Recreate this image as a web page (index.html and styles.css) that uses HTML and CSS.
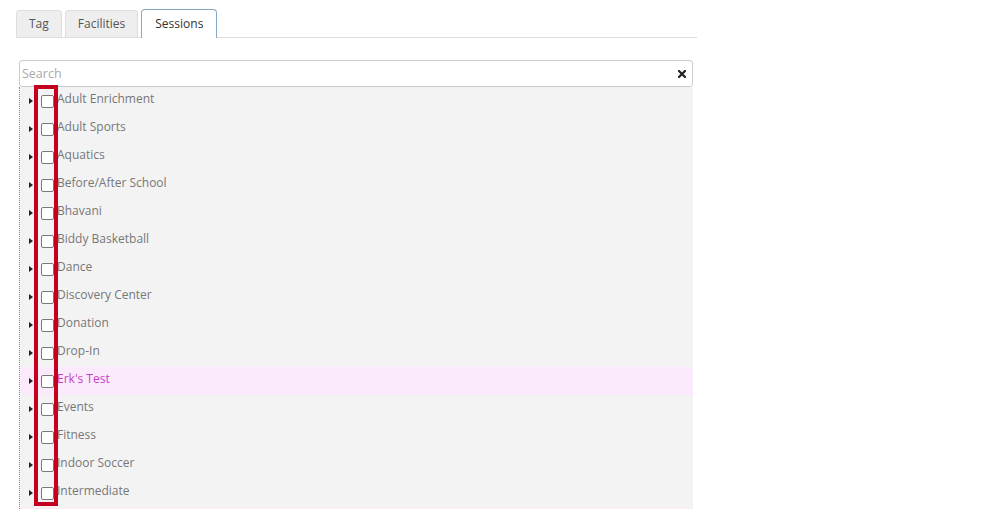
FILE: index.html
```html
<!DOCTYPE html>
<html lang="en">
<head>
<meta charset="utf-8">
<title>Sessions</title>
<link rel="stylesheet" href="styles.css">
</head>
<body>
<div class="page">
  <div class="tabs">
    <div class="tab">Tag</div>
    <div class="tab">Facilities</div>
    <div class="tab active">Sessions</div>
  </div>
  <div class="search">
    <span class="placeholder">Search</span>
    <svg class="clear" width="8" height="8" viewBox="0 0 8 8"><path d="M1 1 L7 7 M7 1 L1 7" stroke="#222" stroke-width="2.2" stroke-linecap="square"/></svg>
  </div>
  <div class="tree">
    <div class="row"><span class="arrow"></span><span class="cb"></span><span class="label">Adult Enrichment</span></div>
    <div class="row"><span class="arrow"></span><span class="cb"></span><span class="label">Adult Sports</span></div>
    <div class="row"><span class="arrow"></span><span class="cb"></span><span class="label">Aquatics</span></div>
    <div class="row"><span class="arrow"></span><span class="cb"></span><span class="label">Before/After School</span></div>
    <div class="row"><span class="arrow"></span><span class="cb"></span><span class="label">Bhavani</span></div>
    <div class="row"><span class="arrow"></span><span class="cb"></span><span class="label">Biddy Basketball</span></div>
    <div class="row"><span class="arrow"></span><span class="cb"></span><span class="label">Dance</span></div>
    <div class="row"><span class="arrow"></span><span class="cb"></span><span class="label">Discovery Center</span></div>
    <div class="row"><span class="arrow"></span><span class="cb"></span><span class="label">Donation</span></div>
    <div class="row"><span class="arrow"></span><span class="cb"></span><span class="label">Drop-In</span></div>
    <div class="row highlight"><span class="arrow"></span><span class="cb"></span><span class="label">Erk's Test</span></div>
    <div class="row"><span class="arrow"></span><span class="cb"></span><span class="label">Events</span></div>
    <div class="row"><span class="arrow"></span><span class="cb"></span><span class="label">Fitness</span></div>
    <div class="row"><span class="arrow"></span><span class="cb"></span><span class="label">Indoor Soccer</span></div>
    <div class="row"><span class="arrow"></span><span class="cb"></span><span class="label">Intermediate</span></div>
    <div class="row-edge"></div>
    <div class="marker"></div>
  </div>
</div>
</body>
</html>
```
FILE: styles.css
```css
html, body {
  margin: 0;
  padding: 0;
  overflow: hidden;
  background: #fff;
}
body {
  font-family: "Open Sans", "Liberation Sans", sans-serif;
  font-size: 12px;
  color: #777;
}
.page {
  width: 681px;
  padding: 9px 0 0 16px;
}
.tabs {
  display: flex;
  align-items: flex-end;
  gap: 3px;
  height: 28px;
  border-bottom: 1px solid #ddd;
}
.tab {
  box-sizing: border-box;
  height: 27px;
  line-height: 26px;
  padding: 0 12px;
  background: #eee;
  border: 1px solid #ddd;
  border-bottom: none;
  border-radius: 4px 4px 0 0;
  color: #555;
}
.tab.active {
  height: 29px;
  line-height: 28px;
  margin-bottom: -1px;
  padding: 0 13px;
  background: #fff;
  border-color: #86aac6;
  color: #333;
}
.search {
  box-sizing: border-box;
  margin: 22px 0 0 3px;
  width: 674px;
  height: 27px;
  border: 1px solid #ccc;
  border-radius: 3px;
  display: flex;
  align-items: center;
  justify-content: space-between;
  padding: 0 6px 0 2px;
}
.placeholder {
  color: #aaa;
  font-size: 12.5px;
}
.clear {
  display: block;
}
.tree {
  position: relative;
  margin-left: 3px;
  width: 674px;
  box-sizing: border-box;
  border-left: 1px dotted #888;
  background: #f3f3f3;
}
.row {
  height: 28px;
  display: flex;
  align-items: center;
  padding-left: 9px;
}
.arrow {
  width: 0;
  height: 0;
  border-left: 4px solid #222;
  border-top: 3.5px solid transparent;
  border-bottom: 3.5px solid transparent;
}
.cb {
  box-sizing: border-box;
  width: 13px;
  height: 13px;
  margin-left: 8px;
  border: 1px solid #777;
  border-radius: 2px;
  background: #fff;
}
.label {
  margin-left: 3px;
  margin-top: -5px;
}
.row.highlight {
  background: #fbeafb;
}
.row.highlight .label {
  color: #c63fc6;
}
.row-edge {
  height: 2px;
  background: #fcefef;
}
.marker {
  position: absolute;
  left: 14px;
  top: -2px;
  width: 24px;
  height: 421px;
  box-sizing: border-box;
  border: 4px solid #c5001f;
}
```
